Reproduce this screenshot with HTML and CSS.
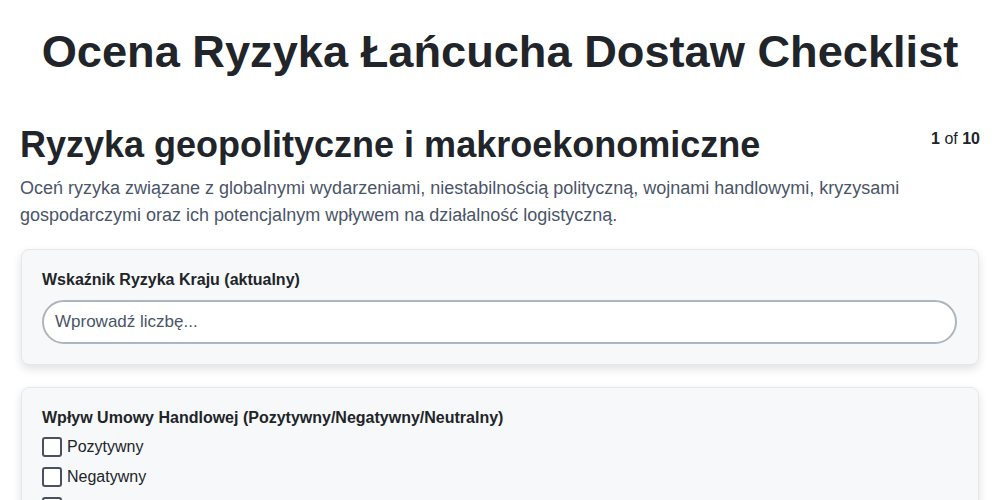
FILE: index.html
```html
<!DOCTYPE html>
<html lang="pl">
<head>
<meta charset="utf-8">
<title>Ocena Ryzyka Łańcucha Dostaw Checklist</title>
<link rel="stylesheet" href="styles.css">
</head>
<body>
<div class="page">
  <h1 class="title">Ocena Ryzyka Łańcucha Dostaw Checklist</h1>
  <section class="section">
    <div class="section-head">
      <h2 class="section-title">Ryzyka geopolityczne i makroekonomiczne</h2>
      <div class="progress"><b>1</b> of <b>10</b></div>
    </div>
    <p class="section-desc">Oceń ryzyka związane z globalnymi wydarzeniami, niestabilnością polityczną, wojnami handlowymi, kryzysami gospodarczymi oraz ich potencjalnym wpływem na działalność logistyczną.</p>
    <div class="card">
      <label class="field-label" for="q1">Wskaźnik Ryzyka Kraju (aktualny)</label>
      <input class="text-input" id="q1" type="text" placeholder="Wprowadź liczbę...">
    </div>
    <div class="card">
      <div class="field-label field-label-tight">Wpływ Umowy Handlowej (Pozytywny/Negatywny/Neutralny)</div>
      <label class="check"><span class="box"></span>Pozytywny</label>
      <label class="check"><span class="box"></span>Negatywny</label>
      <label class="check"><span class="box"></span>Neutralny</label>
    </div>
  </section>
</div>
</body>
</html>
```
FILE: styles.css
```css
* { box-sizing: border-box; }
html, body { margin: 0; padding: 0; background: #ffffff; }
body {
  font-family: "Liberation Sans", Arial, sans-serif;
  color: #212529;
}
.page {
  padding: 0 20px;
}
.title {
  font-size: 45.2px;
  line-height: 54px;
  font-weight: 700;
  text-align: center;
  margin: 0;
  padding: 25px 0 0;
  color: #212529;
  white-space: nowrap;
}
.section {
  margin-top: 44px;
}
.section-head {
  display: flex;
  justify-content: space-between;
  align-items: flex-start;
}
.section-title {
  margin: 0;
  font-size: 36px;
  line-height: 44px;
  font-weight: 700;
  color: #212529;
}
.progress {
  font-size: 16px;
  line-height: 20px;
  padding-top: 6px;
  color: #212529;
}
.section-desc {
  margin: 8px 0 20px;
  font-size: 18px;
  line-height: 27px;
  color: #4a5568;
}
.card {
  background: #f7f8fa;
  border: 1px solid #e5e7eb;
  border-radius: 8px;
  box-shadow: 0 4px 10px rgba(0, 0, 0, 0.12);
  padding: 20px 21px 20px 20px;
  margin: 0 1px 22px;
  display: flex;
  flex-direction: column;
}
.field-label {
  font-size: 16px;
  line-height: 20px;
  font-weight: 700;
  margin-bottom: 10px;
  color: #212529;
}
.field-label-tight {
  margin-bottom: 4px;
}
.text-input {
  height: 44px;
  border: 2px solid #adb5bd;
  border-radius: 22px;
  background: #ffffff;
  padding: 0 11px;
  font-family: inherit;
  font-size: 17px;
  color: #212529;
  outline: none;
}
.text-input::placeholder { color: #4a5568; }
.check {
  display: flex;
  align-items: center;
  gap: 5px;
  font-size: 16px;
  line-height: 30px;
  color: #212529;
}
.box {
  width: 20px;
  height: 20px;
  border: 2px solid #4a5060;
  border-radius: 3px;
  background: #ffffff;
}
```
